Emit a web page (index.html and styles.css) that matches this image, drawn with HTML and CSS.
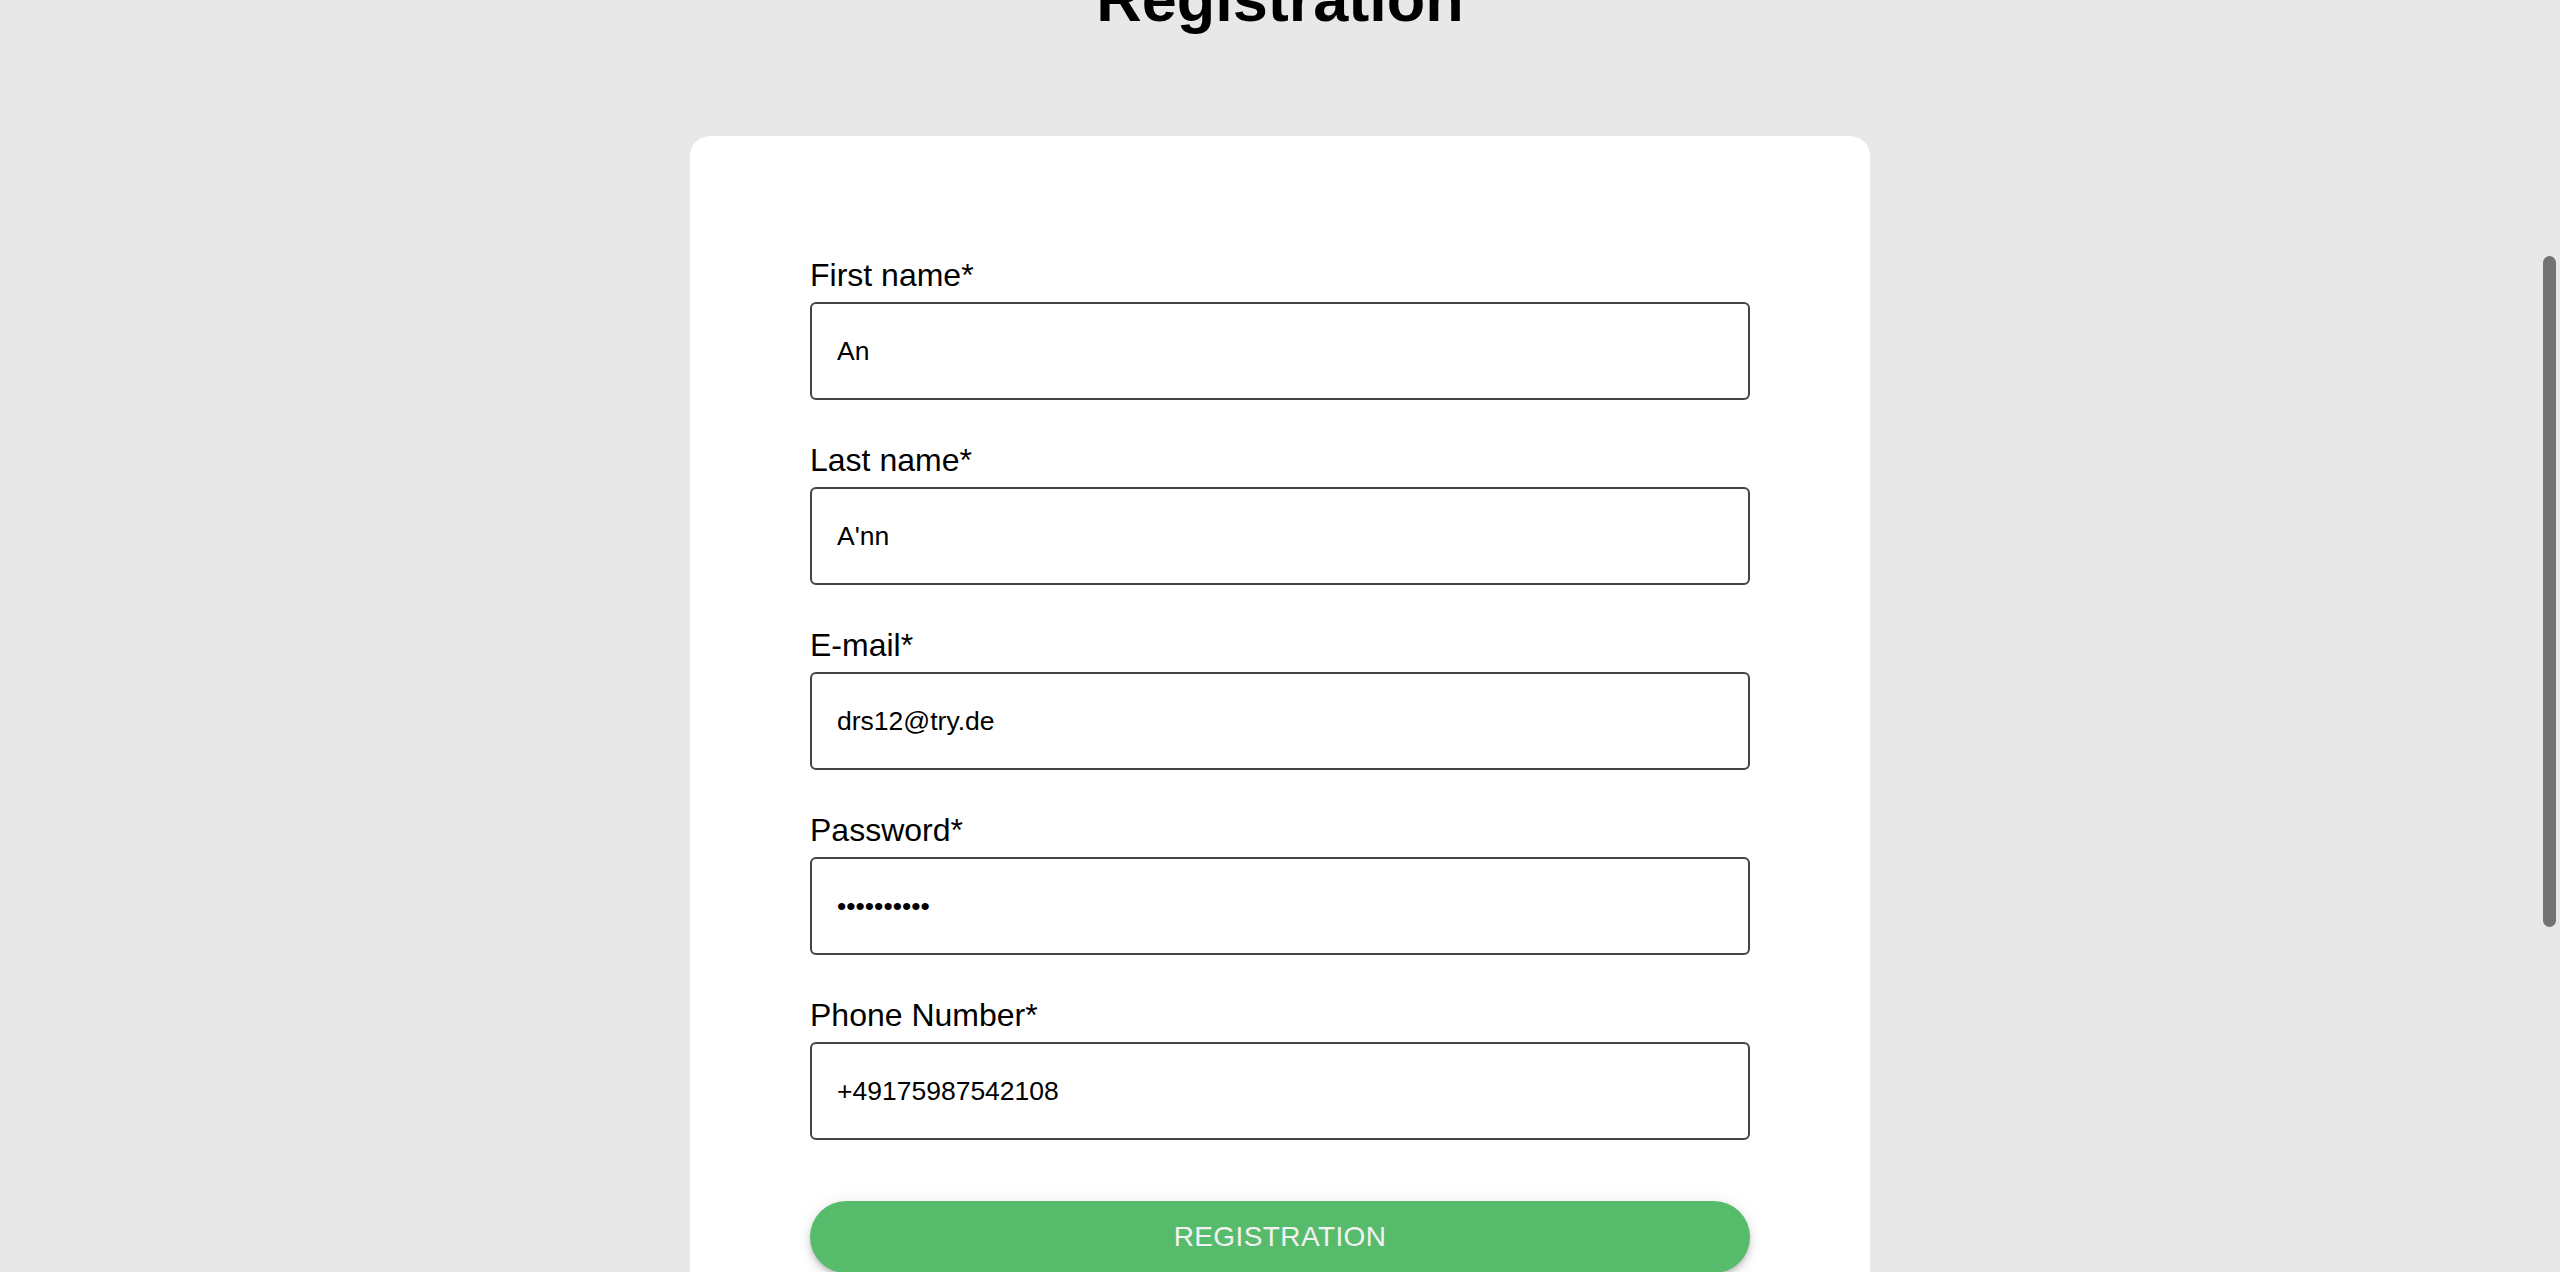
FILE: index.html
```html
<!DOCTYPE html>
<html lang="en">
<head>
<meta charset="utf-8">
<title>Registration</title>
<link rel="stylesheet" href="styles.css">
</head>
<body>
<main class="page">
  <h1 class="title">Registration</h1>
  <form class="card">
    <div class="field">
      <label class="label" for="fn">First name*</label>
      <input class="input" id="fn" type="text" value="An">
    </div>
    <div class="field">
      <label class="label" for="ln">Last name*</label>
      <input class="input" id="ln" type="text" value="A'nn">
    </div>
    <div class="field">
      <label class="label" for="em">E-mail*</label>
      <input class="input" id="em" type="text" value="drs12@try.de">
    </div>
    <div class="field">
      <label class="label" for="pw">Password*</label>
      <input class="input" id="pw" type="password" value="abcdefghij">
    </div>
    <div class="field">
      <label class="label" for="ph">Phone Number*</label>
      <input class="input" id="ph" type="text" value="+49175987542108">
    </div>
    <button class="submit" type="button">Registration</button>
  </form>
</main>
<div class="scroll-thumb"></div>
</body>
</html>
```
FILE: styles.css
```css
html {
  overflow: hidden;
}
body {
  margin: 0;
  background: #e8e8e8;
  font-family: "Liberation Sans", Arial, Helvetica, sans-serif;
  color: #000;
}
.page {
  display: flex;
  flex-direction: column;
  align-items: center;
}
.title {
  font-size: 63px;
  line-height: 64px;
  font-weight: 700;
  margin: -33px 0 105px;
  text-align: center;
}
.card {
  box-sizing: border-box;
  width: 1180px;
  background: #fff;
  border-radius: 20px;
  padding: 121px 120px 120px;
  display: flex;
  flex-direction: column;
}
.field {
  display: flex;
  flex-direction: column;
}
.field + .field {
  margin-top: 42px;
}
.label {
  font-size: 32px;
  line-height: 37px;
  margin-bottom: 8px;
}
.input {
  box-sizing: border-box;
  height: 98px;
  width: 100%;
  border: 2px solid #444;
  border-radius: 6px;
  padding: 0 25px;
  font-family: "Liberation Sans", Arial, Helvetica, sans-serif;
  font-size: 26.5px;
  color: #000;
  background: #fff;
  outline: none;
}
.submit {
  margin-top: 61px;
  height: 72px;
  border: none;
  border-radius: 36px;
  background: #57bb6c;
  color: #f2f2f2;
  font-family: "Liberation Sans", Arial, Helvetica, sans-serif;
  font-size: 28px;
  letter-spacing: 0.4px;
  text-transform: uppercase;
  box-shadow: 0 3px 5px -1px rgba(0,0,0,.18), 0 6px 10px 0 rgba(0,0,0,.1), 0 1px 18px 0 rgba(0,0,0,.08);
}
.scroll-thumb {
  position: fixed;
  top: 256px;
  right: 4px;
  width: 13px;
  height: 671px;
  border-radius: 7px;
  background: #737373;
}
```
